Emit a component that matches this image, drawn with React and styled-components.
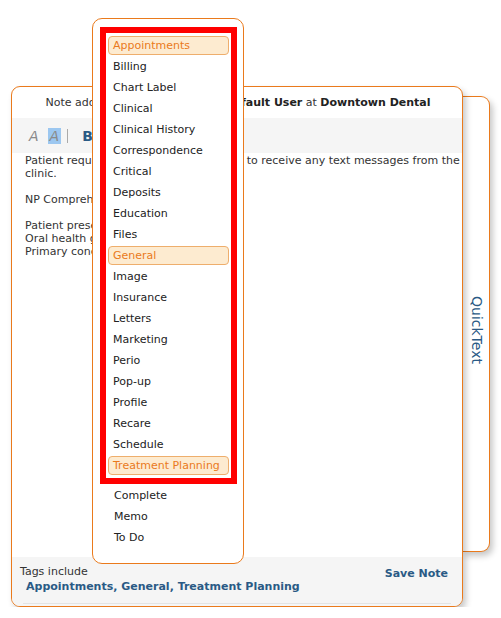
import React from "react";
import styled, { createGlobalStyle } from "styled-components";

const ORANGE = "#ea7a1c";
const BLUE = "#2a5a85";

const Global = createGlobalStyle`
  html, body { margin: 0; padding: 0; background: #fff; }
  body { font-family: "DejaVu Sans", Verdana, sans-serif; font-size: 11px; color: #333; }
`;

const Page = styled.div`
  display: flex;
  align-items: flex-start;
  padding: 86px 0 0 11px;
`;

const NotePanel = styled.div`
  position: relative;
  z-index: 2;
  width: 452px;
  height: 521px;
  box-sizing: border-box;
  border: 1px solid ${ORANGE};
  border-radius: 9px;
  background: #fff;
  box-shadow: 3px 4px 6px rgba(0, 0, 0, 0.22);
  display: flex;
  flex-direction: column;
`;

const Header = styled.div`
  height: 31px;
  display: flex;
  align-items: center;
  justify-content: center;
  color: #333;
  white-space: nowrap;
  padding-left: 2px;
  b { color: #222; }
`;

const Toolbar = styled.div`
  height: 35px;
  background: #f5f5f5;
  display: flex;
  align-items: center;
  padding-left: 16px;
`;

const ToolIcon = styled.span`
  display: inline-flex;
  align-items: center;
  justify-content: center;
  font-family: "DejaVu Sans", sans-serif;
  font-size: 14px;
  height: 16px;
  padding: 0 ${(p) => (p.$bg ? 2 : 1)}px;
  margin-right: ${(p) => p.$mr || 0}px;
  font-style: ${(p) => (p.$italic ? "italic" : "normal")};
  font-weight: ${(p) => (p.$bold ? "bold" : "normal")};
  color: ${(p) => p.$color || "#8a8a8a"};
  background: ${(p) => p.$bg || "transparent"};
`;

const Sep = styled.span`
  width: 1px;
  height: 14px;
  background: #aaa;
  margin-right: 13px;
`;

const Body = styled.div`
  flex: 1;
  padding: 1px 10px 0 13px;
  line-height: 13px;
  color: #333;
  p { margin: 0 0 13px 0; white-space: nowrap; }
`;

const Footer = styled.div`
  height: 49px;
  background: #f5f5f5;
  border-radius: 0 0 8px 8px;
  position: relative;
  display: flex;
  justify-content: space-between;
  padding: 7px 14px 0 8px;
  box-sizing: border-box;
  &::after {
    content: "";
    position: absolute;
    left: 11px;
    right: 11px;
    bottom: 2px;
    height: 1px;
    background: #e4e4e4;
  }
`;

const TagsBlock = styled.div`
  line-height: 15px;
  color: #333;
`;

const TagsList = styled.div`
  font-weight: bold;
  color: ${BLUE};
  padding-left: 6px;
`;

const SaveButton = styled.button`
  border: none;
  background: none;
  font: bold 11px "DejaVu Sans", sans-serif;
  color: ${BLUE};
  padding: 0;
  height: 17px;
  margin-top: 1px;
  cursor: pointer;
`;

const QuickPanel = styled.div`
  margin-top: 10px;
  margin-left: -1px;
  width: 28px;
  height: 456px;
  box-sizing: border-box;
  border: 1px solid ${ORANGE};
  border-left: none;
  border-radius: 0 9px 9px 0;
  background: #fff;
  box-shadow: 3px 4px 6px rgba(0, 0, 0, 0.22);
  display: flex;
  align-items: center;
  justify-content: center;
`;

const QuickLabel = styled.span`
  writing-mode: vertical-rl;
  color: ${BLUE};
  font-size: 14px;
  margin-top: 12px;
  margin-left: 2px;
`;

const Dropdown = styled.div`
  position: absolute;
  left: 80px;
  top: -69px;
  width: 152px;
  height: 546px;
  box-sizing: border-box;
  border: 1px solid ${ORANGE};
  border-radius: 10px;
  background: #fff;
  padding: 8px 6px 0 7px;
  z-index: 5;
`;

const SelectedBox = styled.div`
  border: 6px solid #ff0000;
  padding: 2px 2px;
`;

const Item = styled.div`
  height: 21px;
  box-sizing: border-box;
  display: flex;
  align-items: center;
  padding-left: 5px;
  color: #222;
  ${(p) =>
    p.$active &&
    `
    height: 19px;
    margin: 1px 0;
    background: #fdebd0;
    border: 1px solid #eeae6c;
    border-radius: 4px;
    color: #ea7a1c;
    padding-left: 4px;
  `}
`;

const RestList = styled.div`
  padding-left: 9px;
  padding-top: 1px;
`;

const selectedTags = new Set(["Appointments", "General", "Treatment Planning"]);

const boxed = [
  "Appointments", "Billing", "Chart Label", "Clinical", "Clinical History",
  "Correspondence", "Critical", "Deposits", "Education", "Files", "General",
  "Image", "Insurance", "Letters", "Marketing", "Perio", "Pop-up", "Profile",
  "Recare", "Schedule", "Treatment Planning",
];
const rest = ["Complete", "Memo", "To Do"];

export default function App() {
  return (
    <>
      <Global />
      <Page>
        <NotePanel>
          <Header>
            Note added on Dec 05, 2024 by&nbsp;<b>Default User</b>&nbsp;at&nbsp;<b>Downtown Dental</b>
          </Header>
          <Toolbar>
            <ToolIcon $italic $mr={8}>A</ToolIcon>
            <ToolIcon $italic $bg="#9cc7f0" $mr={6}>A</ToolIcon>
            <Sep />
            <ToolIcon $bold $color={BLUE}>B</ToolIcon>
          </Toolbar>
          <Body>
            <p>
              Patient requested that they do not wish to receive any text messages from the
              <br />
              clinic.
            </p>
            <p>NP Comprehensive Exam</p>
            <p>
              Patient presents for new patient exam.
              <br />
              Oral health goals: maintain.
              <br />
              Primary concern: none.
            </p>
          </Body>
          <Footer>
            <TagsBlock>
              Tags include
              <TagsList>Appointments, General, Treatment Planning</TagsList>
            </TagsBlock>
            <SaveButton>Save Note</SaveButton>
          </Footer>
          <Dropdown>
            <SelectedBox>
              {boxed.map((t) => (
                <Item key={t} $active={selectedTags.has(t)}>{t}</Item>
              ))}
            </SelectedBox>
            <RestList>
              {rest.map((t) => (
                <Item key={t}>{t}</Item>
              ))}
            </RestList>
          </Dropdown>
        </NotePanel>
        <QuickPanel>
          <QuickLabel>QuickText</QuickLabel>
        </QuickPanel>
      </Page>
    </>
  );
}
